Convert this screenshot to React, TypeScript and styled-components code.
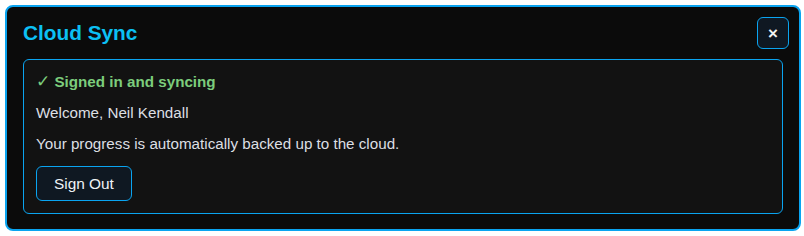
import styled, { createGlobalStyle } from 'styled-components';

const GlobalStyle = createGlobalStyle`
  body {
    margin: 0;
    padding: 5px 3px;
    background: #ffffff;
    font-family: 'Liberation Sans', Arial, sans-serif;
  }
`;

const Panel = styled.div`
  box-sizing: border-box;
  width: 796px;
  height: 226px;
  margin-left: 2px;
  padding: 10px 16px 16px;
  background: #0b0b0b;
  border: 2px solid #0aa4f0;
  border-radius: 8px;
  display: flex;
  flex-direction: column;
  gap: 10px;
`;

const Header = styled.div`
  display: flex;
  align-items: center;
  justify-content: space-between;
  height: 32px;
`;

const Title = styled.h2`
  margin: 0;
  font-size: 20.8px;
  font-weight: 700;
  color: #0cc0f4;
`;

const CloseButton = styled.button`
  box-sizing: border-box;
  width: 32px;
  height: 32px;
  margin-right: -6px;
  padding: 0;
  display: flex;
  align-items: center;
  justify-content: center;
  background: #0f1822;
  border: 1px solid #0aa4f0;
  border-radius: 6px;
  color: #f2f2f2;
  font-family: 'Liberation Sans', Arial, sans-serif;
  font-size: 17px;
  font-weight: 700;
  line-height: 1;
`;

const Card = styled.div`
  box-sizing: border-box;
  flex: 1;
  padding: 12px;
  background: #121212;
  border: 1px solid #0aa4f0;
  border-radius: 6px;
  display: flex;
  flex-direction: column;
  align-items: flex-start;
  gap: 11px;
`;

const Line = styled.div<{ $status?: boolean }>`
  height: 20px;
  font-size: 15.2px;
  line-height: 20px;
  color: ${(props) => (props.$status ? '#7ccd7c' : '#dcdfe3')};
  font-weight: ${(props) => (props.$status ? 700 : 400)};
`;

const Check = styled.span`
  font-family: 'DejaVu Sans', sans-serif;
  font-size: 17px;
  font-weight: 400;
  line-height: 0;
`;

const SignOutButton = styled.button`
  box-sizing: border-box;
  height: 35px;
  margin-top: 1px;
  padding: 0 17px;
  background: #0f1822;
  border: 1px solid #0aa4f0;
  border-radius: 6px;
  color: #eef2f6;
  font-family: 'Liberation Sans', Arial, sans-serif;
  font-size: 15.4px;
`;

export default function App() {
  return (
    <>
      <GlobalStyle />
      <Panel>
        <Header>
          <Title>Cloud Sync</Title>
          <CloseButton aria-label="Close">×</CloseButton>
        </Header>
        <Card>
          <Line $status>
            <Check>✓</Check> Signed in and syncing
          </Line>
          <Line>Welcome, Neil Kendall</Line>
          <Line>Your progress is automatically backed up to the cloud.</Line>
          <SignOutButton>Sign Out</SignOutButton>
        </Card>
      </Panel>
    </>
  );
}
